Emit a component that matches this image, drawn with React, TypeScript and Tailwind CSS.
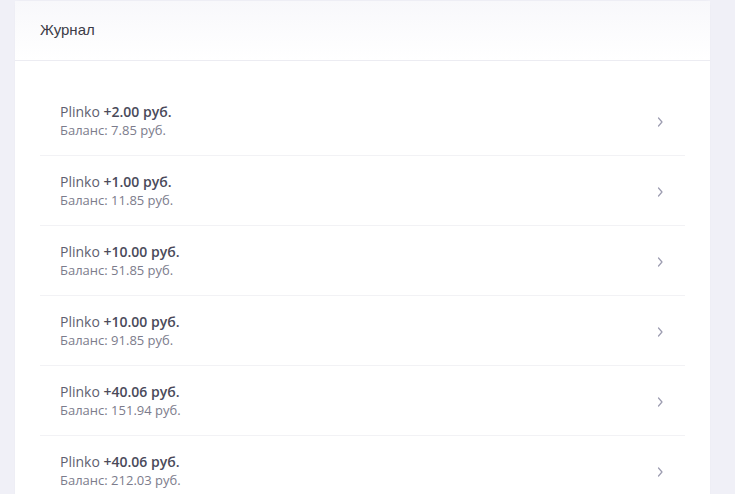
import React from "react";

type Entry = { game: string; amount: string; balance: string };

const entries: Entry[] = [
  { game: "Plinko", amount: "+2.00 руб.", balance: "7.85 руб." },
  { game: "Plinko", amount: "+1.00 руб.", balance: "11.85 руб." },
  { game: "Plinko", amount: "+10.00 руб.", balance: "51.85 руб." },
  { game: "Plinko", amount: "+10.00 руб.", balance: "91.85 руб." },
  { game: "Plinko", amount: "+40.06 руб.", balance: "151.94 руб." },
  { game: "Plinko", amount: "+40.06 руб.", balance: "212.03 руб." },
];

function Chevron() {
  return (
    <svg width="8" height="12" viewBox="0 0 8 12" fill="none" className="text-[#9c9cb0] mt-[2px]">
      <path d="M2.5 2 L6 6 L2.5 10" stroke="currentColor" strokeWidth="1.2" strokeLinecap="round" strokeLinejoin="round" />
    </svg>
  );
}

export default function App() {
  return (
    <div className="w-[735px] h-[494px] overflow-hidden bg-[#f0f0f7] pl-[15px] pt-[1px]">
      <div className="w-[695px] bg-white rounded-t-[4px] shadow-[0_0_2px_rgba(0,0,0,0.03)]">
        <div className="h-[60px] flex items-center px-[25px] bg-gradient-to-b from-[#f8f8fb] to-white border-b border-[#ececf2]">
          <span className="text-[15px] text-[#3c3c48] [font-family:'Liberation_Sans',Arial,sans-serif]">Журнал</span>
        </div>
        <div className="px-[25px] pt-[25px] [font-family:'Open_Sans',sans-serif]">
          {entries.map((e, i) => (
            <div
              key={i}
              className="h-[70px] flex items-center justify-between pl-[20px] pr-[21px] border-b border-[#f2f2f5]"
            >
              <div className="flex flex-col">
                <div className="text-[14px] leading-[19px] text-[#5f5f70]">
                  {e.game} <span className="font-semibold text-[#4a4a5a]">{e.amount}</span>
                </div>
                <div className="text-[13px] leading-[19px] text-[#7c7c8c]">Баланс: {e.balance}</div>
              </div>
              <Chevron />
            </div>
          ))}
        </div>
      </div>
    </div>
  );
}
